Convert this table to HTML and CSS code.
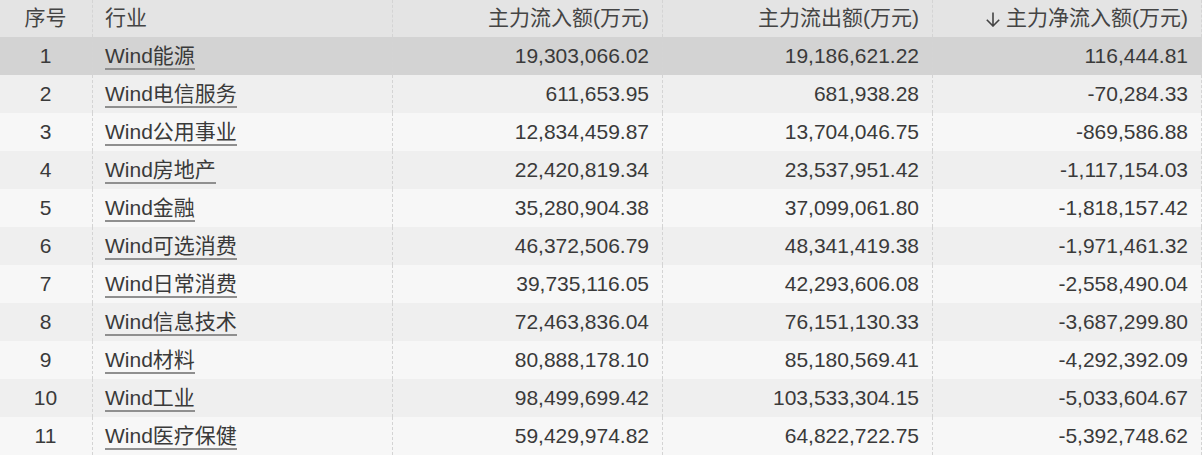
FILE: index.html
```html
<!DOCTYPE html>
<html lang="zh">
<head>
<meta charset="utf-8">
<link rel="stylesheet" href="styles.css">
</head>
<body>
<table class="grid">
  <colgroup>
    <col class="c-no"><col class="c-ind"><col class="c-num"><col class="c-num"><col class="c-last">
  </colgroup>
  <thead>
    <tr>
      <th class="center">序号</th>
      <th class="left">行业</th>
      <th class="right">主力流入额(万元)</th>
      <th class="right">主力流出额(万元)</th>
      <th class="right"><svg class="arrow" width="16" height="16" viewBox="0 0 16 16" aria-hidden="true"><path d="M8 1.5V15M1.8 8.8L8 15L14.2 8.8" fill="none" stroke="#444" stroke-width="1.6"/></svg>主力净流入额(万元)</th>
    </tr>
  </thead>
  <tbody>
    <tr class="sel"><td class="center">1</td><td class="left"><span class="link">Wind能源</span></td><td class="right">19,303,066.02</td><td class="right">19,186,621.22</td><td class="right">116,444.81</td></tr>
    <tr class="even"><td class="center">2</td><td class="left"><span class="link">Wind电信服务</span></td><td class="right">611,653.95</td><td class="right">681,938.28</td><td class="right">-70,284.33</td></tr>
    <tr class="odd"><td class="center">3</td><td class="left"><span class="link">Wind公用事业</span></td><td class="right">12,834,459.87</td><td class="right">13,704,046.75</td><td class="right">-869,586.88</td></tr>
    <tr class="even"><td class="center">4</td><td class="left"><span class="link">Wind房地产</span></td><td class="right">22,420,819.34</td><td class="right">23,537,951.42</td><td class="right">-1,117,154.03</td></tr>
    <tr class="odd"><td class="center">5</td><td class="left"><span class="link">Wind金融</span></td><td class="right">35,280,904.38</td><td class="right">37,099,061.80</td><td class="right">-1,818,157.42</td></tr>
    <tr class="even"><td class="center">6</td><td class="left"><span class="link">Wind可选消费</span></td><td class="right">46,372,506.79</td><td class="right">48,341,419.38</td><td class="right">-1,971,461.32</td></tr>
    <tr class="odd"><td class="center">7</td><td class="left"><span class="link">Wind日常消费</span></td><td class="right">39,735,116.05</td><td class="right">42,293,606.08</td><td class="right">-2,558,490.04</td></tr>
    <tr class="even"><td class="center">8</td><td class="left"><span class="link">Wind信息技术</span></td><td class="right">72,463,836.04</td><td class="right">76,151,130.33</td><td class="right">-3,687,299.80</td></tr>
    <tr class="odd"><td class="center">9</td><td class="left"><span class="link">Wind材料</span></td><td class="right">80,888,178.10</td><td class="right">85,180,569.41</td><td class="right">-4,292,392.09</td></tr>
    <tr class="even"><td class="center">10</td><td class="left"><span class="link">Wind工业</span></td><td class="right">98,499,699.42</td><td class="right">103,533,304.15</td><td class="right">-5,033,604.67</td></tr>
    <tr class="odd"><td class="center">11</td><td class="left"><span class="link">Wind医疗保健</span></td><td class="right">59,429,974.82</td><td class="right">64,822,722.75</td><td class="right">-5,392,748.62</td></tr>
  </tbody>
</table>
</body>
</html>
```

FILE: styles.css
```css
html, body {
  margin: 0;
  padding: 0;
  background: #ffffff;
}

.grid {
  border-collapse: separate;
  border-spacing: 0;
  table-layout: fixed;
  width: 1202px;
  font-family: "Liberation Sans", Arial, "Noto Sans CJK SC", sans-serif;
  font-size: 21px;
  color: #3a3a3a;
}

.c-no { width: 93px; }
.c-ind { width: 300px; }
.c-num { width: 270px; }
.c-last { width: 269px; }

.grid th,
.grid td {
  box-sizing: border-box;
  border-right: 1px dashed #d4d4d4;
  padding: 0 13px 0 12px;
  white-space: nowrap;
  vertical-align: middle;
  font-weight: normal;
  line-height: 22px;
}

.grid thead th {
  height: 37px;
  background: #e4e4e4;
  color: #444444;
  padding-bottom: 2px;
}

.grid tbody td {
  height: 38px;
}

.grid tr.sel td { background: #d3d3d3; }
.grid tr.even td { background: #efefef; }
.grid tr.odd td { background: #f7f7f7; }

.center { text-align: center; }
.left { text-align: left; }
.right { text-align: right; }

.link {
  display: inline-block;
  border-bottom: 2px solid #8f8f8f;
  line-height: 22px;
  padding-bottom: 1px;
  margin-top: 2px;
}

.arrow {
  display: inline-block;
  vertical-align: -2px;
  margin-right: 5px;
}
```
